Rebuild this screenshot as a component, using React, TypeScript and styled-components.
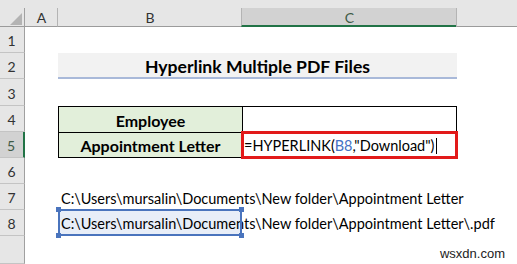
import React from "react";
import styled, {createGlobalStyle} from "styled-components";

const GlobalStyle = createGlobalStyle`
  html, body {
    margin: 0;
    padding: 0;
    background: #ffffff;
    overflow: hidden;
  }
  * {
    box-sizing: border-box;
  }
`;

const GREEN = "#217346";
const HEAD_BG = "#e6e6e6";
const HEAD_SEL = "#d2d2d2";

const Sheet = styled.div`
  position: relative;
  display: grid;
  grid-template-columns: 25px 33px 184px 215px 1fr;
  grid-template-rows: 8px 19px 26px 26px 27px 26px 26px 26px 26px 26px 1fr;
  width: 517px;
  height: 264px;
  background: #ffffff;
  font-family: Lato, "Open Sans", sans-serif;
  color: #000;
`;

const TopStrip = styled.div`
  grid-column: 1 / -1;
  grid-row: 1;
  background: ${HEAD_BG};
`;

const Corner = styled.div`
  grid-column: 1;
  grid-row: 2;
  position: relative;
  background: ${HEAD_BG};
  border-right: 1px solid #a0a0a0;
  border-bottom: 1px solid #9b9b9b;

  & > svg {
    position: absolute;
    left: 10px;
    top: 5px;
  }
`;

const ColHeader = styled.div<{ $col: number; $selected?: boolean }>`
  grid-column: ${p => p.$col};
  grid-row: 2;
  display: flex;
  align-items: center;
  justify-content: center;
  padding-top: 1px;
  font-size: 14px;
  color: ${p => p.$selected ? "#3f5a46" : "#333"};
  background: ${p => p.$selected ? HEAD_SEL : HEAD_BG};
  border-left: 1px solid ${p => p.$col === 2 ? "transparent" : "#b4b4b4"};
  border-bottom: ${p => p.$selected ? `2px solid ${GREEN}` : "1px solid #9b9b9b"};
  margin-left: -1px;
`;

const RowHeader = styled.div<{ $row: number; $selected?: boolean }>`
  grid-column: 1;
  grid-row: ${p => p.$row};
  display: flex;
  align-items: flex-end;
  justify-content: center;
  padding-bottom: 3px;
  padding-right: 1px;
  font-size: 14px;
  color: ${p => p.$selected ? "#3f5a46" : "#333"};
  background: ${p => p.$selected ? HEAD_SEL : HEAD_BG};
  border-bottom: 1px solid #c4c4c4;
  border-right: ${p => p.$selected ? `2px solid ${GREEN}` : "1px solid #a0a0a0"};
`;

const Title = styled.div`
  grid-column: 3 / 5;
  grid-row: 4;
  display: flex;
  align-items: center;
  justify-content: center;
  padding-top: 3px;
  background: #f2f2f2;
  border-bottom: 2px solid #a9b9d9;
  font-size: 17.6px;
  font-weight: 700;
`;

const Table = styled.div`
  grid-column: 3 / 5;
  grid-row: 6 / 8;
  display: grid;
  grid-template-columns: 183px 1fr;
  grid-template-rows: 1fr 1fr;
  gap: 1px;
  padding: 1px;
  background: #000;
`;

const LabelCell = styled.div`
  display: flex;
  align-items: center;
  justify-content: center;
  padding-top: 2px;
  background: #e2efda;
  font-size: 16px;
  font-weight: 700;
`;

const ValueCell = styled.div<{ $editing?: boolean }>`
  position: relative;
  display: flex;
  align-items: center;
  padding: 2px 0 0 1px;
  background: #fff;
  font-size: 14.5px;
  white-space: nowrap;
  ${p => p.$editing ? `
    outline: 3px solid #e21a1a;
    outline-offset: -1px;
    z-index: 1;
  ` : ""}
`;

const Ref = styled.span`
  color: #4472c4;
`;

const Caret = styled.span`
  display: inline-block;
  width: 1px;
  height: 16px;
  margin-left: 2px;
  background: #000;
`;

const TextCell = styled.div<{ $row: number; $picked?: boolean }>`
  grid-column: 3;
  grid-row: ${p => p.$row};
  position: relative;
  display: flex;
  align-items: center;
  padding: 2px 0 0 3px;
  font-size: 14.5px;
  white-space: nowrap;
  overflow: visible;
  background: ${p => p.$picked ? "#e8eef8" : "transparent"};
  margin-top: ${p => p.$picked ? "-1px" : "0"};

  ${p => p.$picked ? `
    &::after {
      content: "";
      position: absolute;
      inset: 0;
      border: 2px solid #4a74bd;
      z-index: 1;
    }
  ` : ""}
`;

const Handle = styled.span<{ $x: "left" | "right"; $y: "top" | "bottom" }>`
  position: absolute;
  ${p => p.$x}: -2px;
  ${p => p.$y}: -2px;
  width: 5px;
  height: 5px;
  background: #4a74bd;
  z-index: 2;
`;

const Watermark = styled.div`
  position: absolute;
  right: 12px;
  bottom: 3px;
  font-family: "Liberation Sans", Arial, sans-serif;
  font-size: 13px;
  color: #222;
`;

const rows = [1, 2, 3, 4, 5, 6, 7, 8];

export default function App() {
  return (
    <>
      <GlobalStyle/>
      <Sheet>
        <TopStrip/>
        <Corner>
          <svg width="12" height="12" viewBox="0 0 12 12">
            <polygon points="12,0 12,12 0,12" fill="#b3b3b3"/>
          </svg>
        </Corner>
        <ColHeader $col={2}>A</ColHeader>
        <ColHeader $col={3}>B</ColHeader>
        <ColHeader $col={4} $selected>C</ColHeader>
        <ColHeader $col={5}/>

        {rows.map(r => (
          <RowHeader key={r} $row={r + 2} $selected={r === 5}>{r}</RowHeader>
        ))}
        <RowHeader $row={11}/>

        <Title>Hyperlink Multiple PDF Files</Title>

        <Table>
          <LabelCell>Employee</LabelCell>
          <ValueCell/>
          <LabelCell>Appointment Letter</LabelCell>
          <ValueCell $editing>
            =HYPERLINK(<Ref>B8</Ref>,"Download")<Caret/>
          </ValueCell>
        </Table>

        <TextCell $row={9}>C:\Users\mursalin\Documents\New folder\Appointment Letter</TextCell>
        <TextCell $row={10} $picked>
          C:\Users\mursalin\Documents\New folder\Appointment Letter\.pdf
          <Handle $x="left" $y="top"/>
          <Handle $x="right" $y="top"/>
          <Handle $x="left" $y="bottom"/>
          <Handle $x="right" $y="bottom"/>
        </TextCell>

        <Watermark>wsxdn.com</Watermark>
      </Sheet>
    </>
  );
}
